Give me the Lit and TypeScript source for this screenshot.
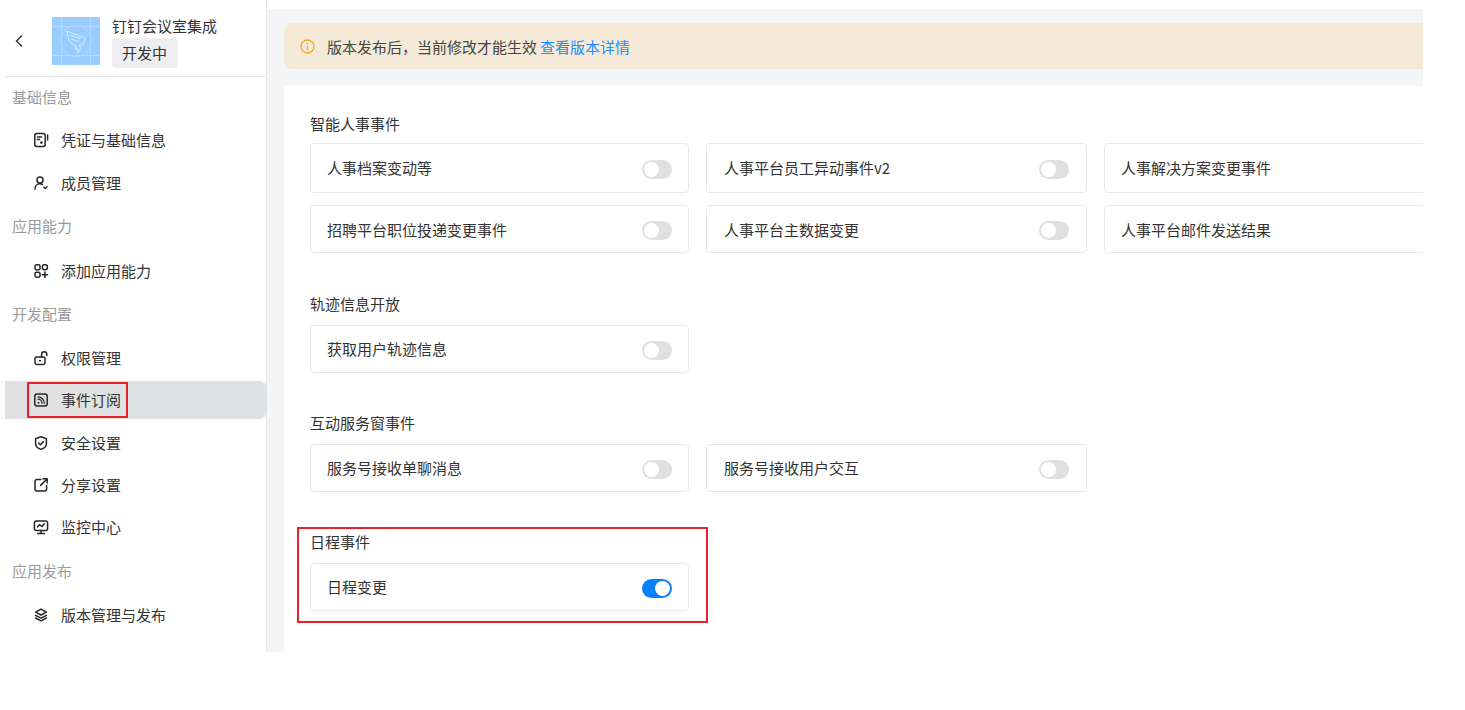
import { LitElement, html, css, svg } from "lit";
import { customElement } from "lit/decorators.js";

const s = (body: unknown) => html`<svg class="ico" viewBox="0 0 16 16" fill="none" stroke="#262626" stroke-width="1.5" stroke-linecap="round" stroke-linejoin="round">${body}</svg>`;

const icons: Record<string, unknown> = {
  cred: s(svg`<rect x="1.8" y="1.6" width="10.4" height="12.8" rx="2"/><path d="M4.4 5h4.2M4.4 7.4h2"/><circle cx="8.4" cy="10.6" r="1.3" fill="#262626" stroke="none"/><path d="M14.6 3v5"/>`),
  member: s(svg`<circle cx="7" cy="5" r="3"/><path d="M2 14c0-3 2-5.2 5-5.2 1 0 1.8.2 2.5.6"/><path d="M10.8 12l1.5 1.6 1.900-2.200" stroke-width="1.3"/>`),
  add: s(svg`<rect x="2" y="1.800" width="5" height="5" rx="1.400"/><rect x="9.400" y="1.800" width="5" height="5" rx="2"/><rect x="2" y="9.200" width="5" height="5" rx="1.400"/><path d="M11.900 9v5.400M9.200 11.700h5.400"/>`),
  lock: s(svg`<rect x="2" y="7" width="10" height="7.4" rx="1.6"/><path d="M8.6 7V4.4a2.6 2.6 0 0 1 5.200 0v1"/><circle cx="7" cy="10.7" r="1" fill="#262626" stroke="none"/>`),
  rss: s(svg`<rect x="1.800" y="2" width="12.400" height="12" rx="2.200"/><path d="M5 7.200a4 4 0 0 1 4 4M5 4.900a6.300 6.300 0 0 1 6.300 6.300" stroke-width="1.300"/><circle cx="5.500" cy="10.800" r="1" fill="#262626" stroke="none"/>`),
  shield: s(svg`<path d="M8 1.800l5.400 2v4.600c0 3-2.400 5-5.400 6-3-1-5.400-3-5.400-6V3.800z"/><path d="M5.700 8l1.700 1.700 3-3"/>`),
  share: s(svg`<path d="M8 2.400H4a2 2 0 0 0-2 2v7.600a2 2 0 0 0 2 2h7.600a2 2 0 0 0 2-2V8.400"/><path d="M7.600 8.400L14 2M10 1.800h4.200V6" />`),
  monitor: s(svg`<rect x="1.400" y="2" width="13.200" height="9.400" rx="2"/><path d="M4.400 8l2-2.200 2.600 1.600 2.400-2.600"/><path d="M8 11.400v2.800M4.600 14.400h6.800"/>`),
  layers: s(svg`<path d="M8 2.200l5.400 2.900L8 8 2.600 5.100z"/><path d="M2.600 8.300L8 11.100l5.400-2.800M2.600 11L8 13.800l5.400-2.800"/>`),
};

// gap = distance in px from the previous nav row, as measured in the layout
const nav: { label?: string; item?: string; icon?: string; active?: boolean; gap: number }[] = [
  { label: "基础信息", gap: 0.5 },
  { item: "凭证与基础信息", icon: "cred", gap: 5 },
  { item: "成员管理", icon: "member", gap: 5 },
  { label: "应用能力", gap: 5 },
  { item: "添加应用能力", icon: "add", gap: 7 },
  { label: "开发配置", gap: 5 },
  { item: "权限管理", icon: "lock", gap: 6 },
  { item: "事件订阅", icon: "rss", active: true, gap: 4 },
  { item: "安全设置", icon: "shield", gap: 5 },
  { item: "分享设置", icon: "share", gap: 4 },
  { item: "监控中心", icon: "monitor", gap: 4 },
  { label: "应用发布", gap: 6 },
  { item: "版本管理与发布", icon: "layers", gap: 6 },
];

const groups: { title: string; cls: string; rows: string[]; on?: boolean; mark?: boolean }[] = [
  { title: "智能人事事件", cls: "g1", rows: ["人事档案变动等", "人事平台员工异动事件v2", "人事解决方案变更事件", "招聘平台职位投递变更事件", "人事平台主数据变更", "人事平台邮件发送结果"] },
  { title: "轨迹信息开放", cls: "g2", rows: ["获取用户轨迹信息"] },
  { title: "互动服务窗事件", cls: "g3", rows: ["服务号接收单聊消息", "服务号接收用户交互"] },
  { title: "日程事件", cls: "g4", rows: ["日程变更"], on: true, mark: true },
];

@customElement("app-root")
export class AppRoot extends LitElement {
  static styles = css`
    :host {
      display: block;
      width: 1465px;
      height: 710px;
      background: #fff;
      overflow: hidden;
      font-family: "Noto Sans CJK SC", "Liberation Sans", sans-serif;
      font-size: 15px;
      color: #333;
    }
    .frame { display: flex; width: 1423px; height: 652px; padding-left: 5px; box-sizing: border-box; overflow: hidden; }
    .side { width: 262px; flex: none; border-right: 1px solid #e6e7e9; box-sizing: border-box; }
    .head { height: 77px; border-bottom: 1px solid #e4e5e7; box-sizing: border-box; display: flex; align-items: flex-start; }
    .back { width: 47px; height: 76px; flex: none; display: flex; align-items: center; padding: 6px 0 0 8px; box-sizing: border-box; }
    .back svg { width: 12px; height: 14px; }
    .logo { width: 48px; height: 48px; flex: none; margin-top: 17px; display: block; }
    .meta { margin: 16px 0 0 12px; display: flex; flex-direction: column; align-items: flex-start; gap: 2px; }
    .name { line-height: 20px; color: #333; white-space: nowrap; }
    .tag { width: 66px; box-sizing: border-box; height: 30px; line-height: 30px; padding-left: 10px; background: #eceef0; border-radius: 4px; color: #333; white-space: nowrap; }
    .row { height: 38px; display: flex; align-items: center; white-space: nowrap; }
    .label { padding-left: 7px; color: #9a9a9a; }
    .item { padding-left: 28px; color: #333; position: relative; }
    .item.active { background: #e0e1e3; margin-right: -1px; border-radius: 0 8px 8px 0; }
    .item.active::after { content: ""; position: absolute; left: 22px; top: 1px; width: 97px; height: 32px; border: 2px solid #e8202a; }
    .ico { width: 16px; height: 16px; flex: none; margin-right: 12px; }
    .main { flex: 1; min-width: 0; margin-top: 9px; background: #f4f5f7; padding-left: 17px; display: flex; flex-direction: column; overflow: hidden; }
    .banner { margin-top: 14px; height: 46px; flex: none; background: #f5ead8; border-radius: 8px 0 0 8px; display: flex; align-items: center; padding-left: 16px; white-space: nowrap; color: #444; }
    .banner svg { width: 15px; height: 15px; margin-right: 12px; flex: none; }
    .banner a { color: #1a8cff; margin-left: 3px; text-decoration: none; }
    .panel { margin-top: 17px; flex: 1; background: #fff; padding: 28px 0 0 26px; overflow: hidden; }
    .group { position: relative; margin-bottom: 41px; }
    .g2 { margin-bottom: 40px; }
    .g3 { margin-bottom: 40px; }
    .group.mark::after { content: ""; position: absolute; left: -13px; top: -5px; width: 407px; height: 92px; border: 2px solid #e8202a; }
    .title { line-height: 20px; height: 20px; color: #333; }
    .g1 .title { margin-bottom: 9px; }
    .g2 .title, .g3 .title, .g4 .title { margin-bottom: 11px; }
    .grid { display: grid; grid-template-columns: 379px 381px 381px; column-gap: 17px; row-gap: 12px; width: 1175px; }
    .card { height: 48px; box-sizing: border-box; border: 1px solid #e8e9eb; border-radius: 4px; display: flex; align-items: center; justify-content: space-between; padding: 0 16px 2px 16px; white-space: nowrap; color: #333; background: #fff; }
    .card:nth-child(3n+2) { padding-left: 17px; padding-right: 17px; }
    .g1 .card:nth-child(-n+3) { height: 50px; }
    .g1 .card:nth-child(n+4) { padding-bottom: 0; }
    .sw { width: 30px; height: 19px; border-radius: 10px; background: #dfe0e2; position: relative; flex: none; margin-top: 4px; }
    .g1 .card:nth-child(n+4) .sw { margin-top: 2px; }
    .sw::after { content: ""; position: absolute; left: 2px; top: 2px; width: 15px; height: 15px; border-radius: 50%; background: #fff; }
    .sw.on { background: #0a80ff; }
    .sw.on::after { left: 13px; }
  `;

  render() {
    return html`<div class="frame">
      <aside class="side">
        <div class="head">
          <div class="back"><svg viewBox="0 0 12 14" fill="none" stroke="#333" stroke-width="1.500"><path d="M9 1.500L3.500 7 9 12.500"/></svg></div>
          <svg class="logo" viewBox="0 0 48 48">
            <rect width="48" height="48" rx="1" fill="#99ccff"/>
            <path d="M9.500 0v48M38.500 0v48M0 9.500h48M0 38.500h48" stroke="#b5daff" stroke-width="1"/>
            <circle cx="24" cy="24" r="15.500" fill="none" stroke="#b5daff" stroke-width="1"/>
            <path d="M15 14c5 3 12 4 18 7 0 3-2 6-3 7h-3l2 3-3 5v-4h-3l1.500-3c-4.500-1-7.500-5-8.500-9z" fill="none" stroke="#d6ebff" stroke-width="1" stroke-linejoin="round"/>
            <path d="M17.500 18c3.500 1.500 7 2.500 11 3.500M19 22c2.500 1 5 1.800 8 2.500" fill="none" stroke="#d6ebff" stroke-width="1"/>
          </svg>
          <div class="meta"><div class="name">钉钉会议室集成</div><span class="tag">开发中</span></div>
        </div>
        ${nav.map((n) => n.label
          ? html`<div class="row label" style="margin-top:${n.gap}px">${n.label}</div>`
          : html`<div class="row item ${n.active ? "active" : ""}" style="margin-top:${n.gap}px">${icons[n.icon!]}<span>${n.item}</span></div>`)}
      </aside>
      <main class="main">
        <div class="banner">
          <svg viewBox="0 0 15 15" fill="none" stroke="#f5a623" stroke-width="1.300"><circle cx="7.500" cy="7.500" r="6.500"/><path d="M7.500 6.800v4M7.500 4v1.300"/></svg>
          <span>版本发布后，当前修改才能生效</span><a>查看版本详情</a>
        </div>
        <section class="panel">
          ${groups.map((g) => html`<div class="group ${g.cls} ${g.mark ? "mark" : ""}">
            <div class="title">${g.title}</div>
            <div class="grid">
              ${g.rows.map((r) => html`<div class="card"><span>${r}</span><i class="sw ${g.on ? "on" : ""}"></i></div>`)}
            </div>
          </div>`)}
        </section>
      </main>
    </div>`;
  }
}
